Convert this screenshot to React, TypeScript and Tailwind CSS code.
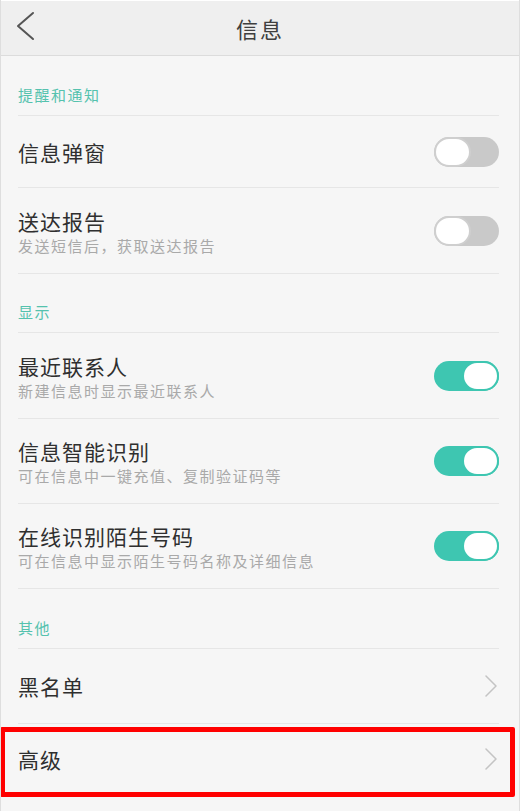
const font = { fontFamily: '"Noto Sans CJK SC", "Noto Sans", sans-serif' };

const Toggle = ({ on }: { on: boolean }) => (
  <div
    className={`flex h-[30px] w-[65px] shrink-0 rounded-full ${on ? 'justify-end bg-[#3ec6b1]' : 'justify-start bg-[#c9c9c9]'}`}
  >
    <span
      className={`h-[30px] w-[37px] rounded-full border-2 bg-white ${on ? 'border-[#3ec6b1]' : 'border-[#cfcfcf]'}`}
    />
  </div>
);

const Chevron = () => (
  <svg className="h-[22px] w-[12px] shrink-0" viewBox="0 0 12 22" fill="none">
    <path d="M1 1 L11 11 L1 21" stroke="#c4c4c4" strokeWidth="1.5" strokeLinecap="round" strokeLinejoin="round" />
  </svg>
);

const SectionTitle = ({ label, height = 'h-[60px]' }: { label: string; height?: string }) => (
  <div className={`flex items-end border-b border-[#e6e6e6] pb-[10px] ${height}`}>
    <span className="text-[15px] leading-[20px] tracking-[1.5px] text-[#55c2ae]">{label}</span>
  </div>
);

const Row = ({
  title,
  sub,
  on,
  height,
}: {
  title: string;
  sub?: string;
  on: boolean;
  height: string;
}) => (
  <div className={`flex items-center justify-between border-b border-[#e6e6e6] ${height}`}>
    <div className="flex flex-col">
      <span className="text-[21px] leading-[30px] tracking-[1px] text-[#2f2f2f]">{title}</span>
      {sub && (
        <span className="text-[15px] leading-[20px] tracking-[1.5px] text-[#a9a9a9]">{sub}</span>
      )}
    </div>
    <Toggle on={on} />
  </div>
);

const LinkRow = ({ title, height, last }: { title: string; height: string; last?: boolean }) => (
  <div className={`flex items-center justify-between pr-[2px] ${last ? '' : 'border-b border-[#e6e6e6]'} ${height}`}>
    <span className="text-[21px] leading-[30px] tracking-[1px] text-[#2f2f2f]">{title}</span>
    <Chevron />
  </div>
);

export default function App() {
  return (
    <div
      className="h-[811px] w-[520px] overflow-hidden border-x border-[#dedede] bg-[#f6f6f6]"
      style={font}
    >
      {/* Top bar */}
      <header className="relative flex h-[56px] items-center justify-center border-t border-white border-b border-b-[#dcdcdc] bg-[#efefef]">
        <svg className="absolute left-[15px] top-[10px] h-[30px] w-[19px]" viewBox="0 0 19 30" fill="none">
          <path d="M17 2 L2 15 L17 28" stroke="#555555" strokeWidth="2" strokeLinecap="round" strokeLinejoin="round" />
        </svg>
        <span className="text-[22px] leading-[30px] tracking-[2px] text-[#3f3f3f]">信息</span>
      </header>

      <div className="pl-[17px] pr-[20px]">
        <SectionTitle label="提醒和通知" />
        <Row title="信息弹窗" on={false} height="h-[72px]" />
        <Row title="送达报告" sub="发送短信后，获取送达报告" on={false} height="h-[86px]" />

        <SectionTitle label="显示" height="h-[59px]" />
        <Row title="最近联系人" sub="新建信息时显示最近联系人" on height="h-[86px]" />
        <Row title="信息智能识别" sub="可在信息中一键充值、复制验证码等" on height="h-[85px]" />
        <Row title="在线识别陌生号码" sub="可在信息中显示陌生号码名称及详细信息" on height="h-[85px]" />

        <SectionTitle label="其他" />
        <LinkRow title="黑名单" height="h-[75px]" />

        <div className="relative">
          <LinkRow title="高级" height="h-[70px]" last />
          {/* highlight annotation */}
          <span className="pointer-events-none absolute left-[-18px] right-[-16px] top-[3px] h-[70px] rounded-[2px] border-[5px] border-[#ff0000]" />
        </div>
      </div>
    </div>
  );
}
